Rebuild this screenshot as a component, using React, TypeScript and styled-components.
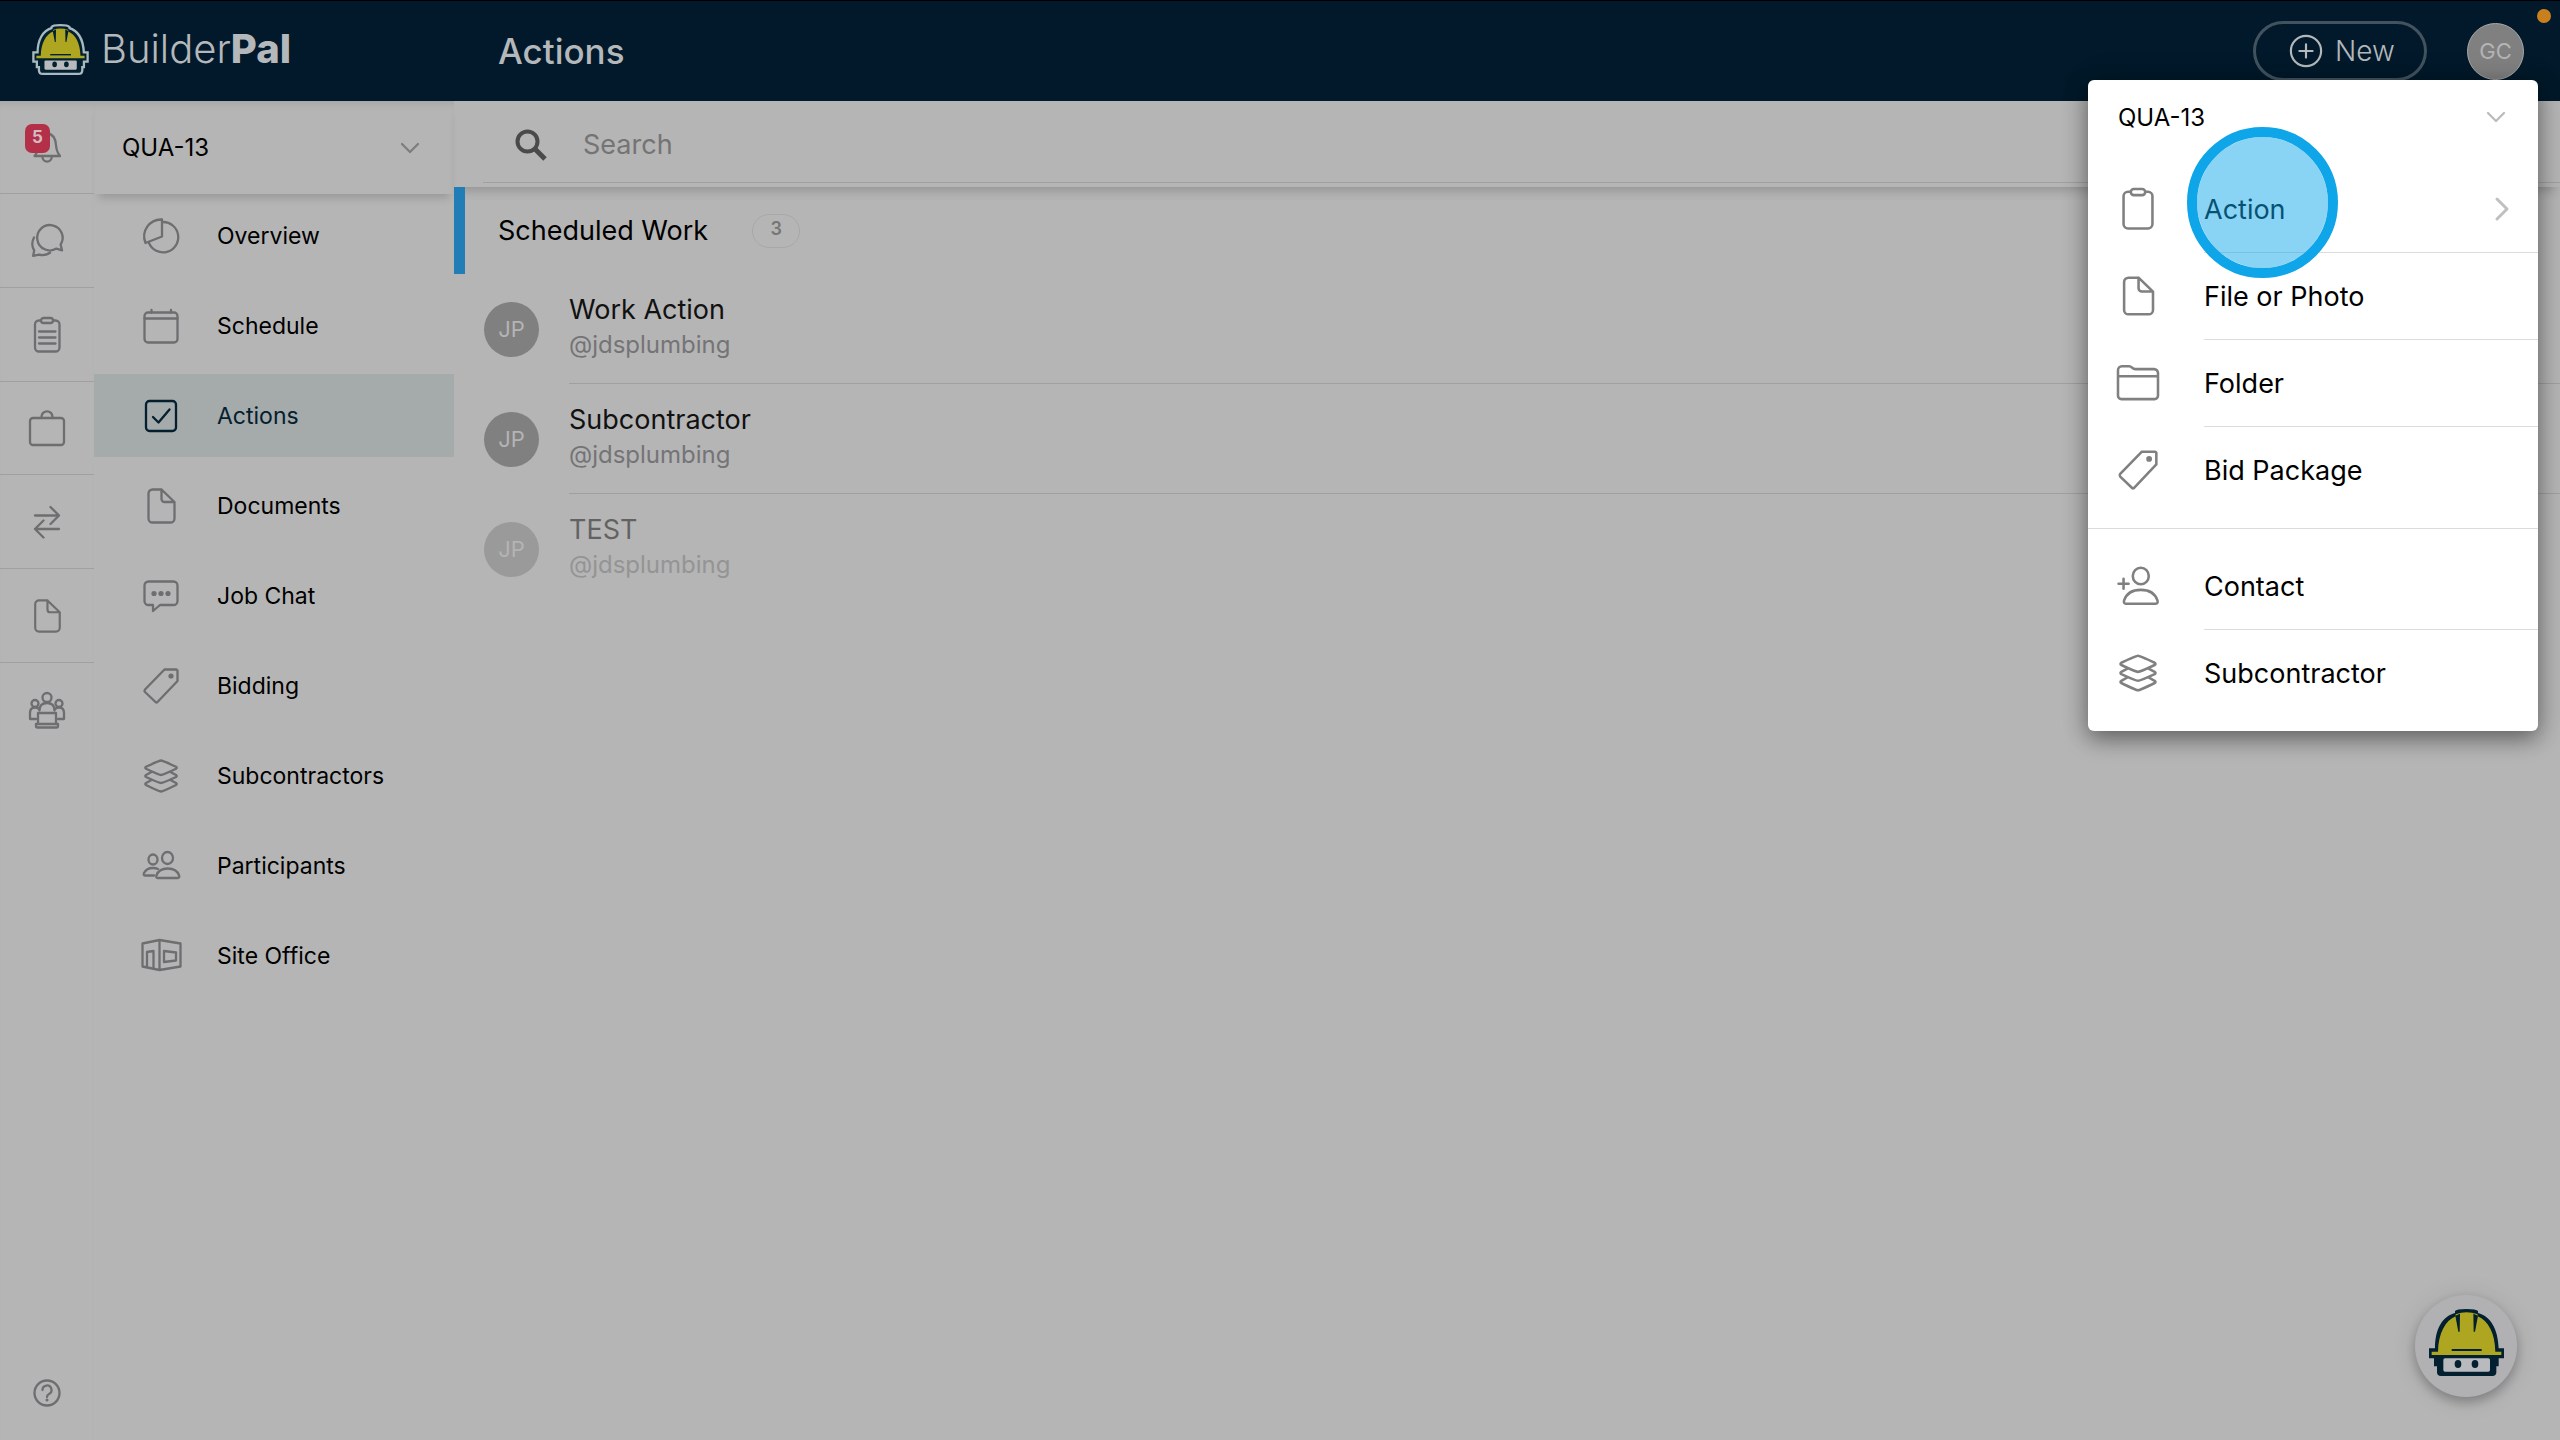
import React from "react";
import styled, { createGlobalStyle } from "styled-components";

const color = {
  navy: "#01192a",
  surface: "#b5b5b5",
  line: "#a0a0a0",
  icon: "#6e6e71",
  muted: "#747476",
  accent: "#217db5",
  selected: "#a5aaab",
};

const GlobalStyle = createGlobalStyle`
  *, *::before, *::after { box-sizing: border-box; }
  body {
    margin: 0;
    background: ${color.surface};
    color: #000;
    font-family: Inter, "Open Sans", sans-serif;
    font-size: 23px;
  }
  button, input, select { font: inherit; color: inherit; }
  h1, h2, p, ul { margin: 0; padding: 0; }
  ul { list-style: none; }
`;

/* ---------- icons ---------- */

const Svg = styled.svg`
  display: block;
  flex: none;
  overflow: visible;
  fill: none;
  stroke: currentColor;
  stroke-width: 2.3;
  stroke-linecap: round;
  stroke-linejoin: round;
`;

const Dot = styled.circle`
  fill: currentColor;
  stroke: none;
`;

type IconName =
  | "bell" | "chats" | "clipboard" | "briefcase" | "swap" | "file" | "team" | "help"
  | "pie" | "calendar" | "check" | "chat" | "tag" | "layers" | "people" | "office"
  | "clipboardPlain" | "folder" | "contact" | "plus";

const shapes: Record<IconName, React.ReactNode> = {
  bell: (
    <>
      <path d="M5.5 27C8.5 24 9 21 9 16C9 9 12 5 18 4C24 5 26.5 9 27 16C27.3 21 28.5 24 31 27Z" />
      <path d="M13.5 28a4.6 4.6 0 0 0 9.2 0" />
    </>
  ),
  chats: (
    <>
      <path d="M27.5 25.6L33 27.3L31.6 21.6A12.7 12.7 0 1 0 27.5 25.6Z" />
      <path d="M5 14.5C2.4 19 3 24.5 5.2 27.5L4.2 32.8L10 31.6C14 32.6 18 31.8 21 29.8" />
    </>
  ),
  clipboard: (
    <>
      <rect x="6" y="3.5" width="24.5" height="31" rx="4" />
      <rect x="12" y="1" width="12" height="5" rx="2.5" fill={color.surface} />
      <path d="M10 14.5H26.5M10 20.5H26.5M10 26.5H26.5" />
    </>
  ),
  clipboardPlain: (
    <>
      <rect x="5" y="2.5" width="26" height="33" rx="4" />
      <rect x="11.5" y="0" width="13" height="5.5" rx="2.7" fill="#fff" />
    </>
  ),
  briefcase: (
    <>
      <rect x="1" y="8" width="34" height="27" rx="3" />
      <path d="M12.5 8V6.8a5.5 5.5 0 0 1 11 0V8" />
    </>
  ),
  swap: <path d="M6 11.5H30M21.5 3L30 11.5L21.5 20M30 25H6M14.5 16.5L6 25L14.5 33.5" />,
  file: (
    <path d="M18.5 1.5H9.5a4 4 0 0 0-4 4v25a4 4 0 0 0 4 4h18a4 4 0 0 0 4-4V14L18.5 1.5V11a3 3 0 0 0 3 3h10" />
  ),
  team: (
    <>
      <circle cx="18" cy="5.5" r="4.5" />
      <circle cx="6" cy="11.5" r="3.5" />
      <circle cx="30" cy="11.5" r="3.5" />
      <path d="M10.5 18.5C10.5 13 13.5 11 18 11S25.5 13 25.5 18.5" />
      <path d="M7 27H1V21C1 17 3 15.5 6 15.5C7.5 15.5 9 16 10 17.2M29 27H35V21C35 17 33 15.5 30 15.5C28.5 15.5 27 16 26 17.2" />
      <path d="M9 21H27V32H9ZM7 32H29V34a1.5 1.5 0 0 1-1.5 1.5H8.5A1.5 1.5 0 0 1 7 34Z" />
    </>
  ),
  help: (
    <>
      <circle cx="18" cy="18" r="12.5" />
      <path d="M13.5 15a4.5 4.5 0 1 1 6.5 4c-1.5.8-2 1.5-2 3" />
      <Dot cx="18" cy="25" r="1.5" />
    </>
  ),
  pie: (
    <>
      <path d="M19 1.5A17 17 0 0 0 2.5 25L19 18.5Z" />
      <path d="M20 4A15.2 15.2 0 1 1 6 25" />
    </>
  ),
  calendar: (
    <>
      <rect x="1.5" y="4.5" width="33" height="30" rx="3.5" />
      <path d="M1.5 10.5H34.5M8.5 2V4.5M28 2V4.5" />
    </>
  ),
  check: (
    <>
      <rect x="3" y="3" width="30" height="30" rx="3.5" />
      <path d="M10 19L15.5 24.5L26.5 11.5" />
    </>
  ),
  chat: (
    <>
      <path d="M5.5 3.5H30.5a4 4 0 0 1 4 4V23a4 4 0 0 1-4 4H17L10 33V27H5.5a4 4 0 0 1-4-4V7.5a4 4 0 0 1 4-4Z" />
      <Dot cx="11" cy="15.5" r="2.6" />
      <Dot cx="18" cy="15.5" r="2.6" />
      <Dot cx="25" cy="15.5" r="2.6" />
    </>
  ),
  tag: (
    <>
      <path d="M21.5 1.5H33.5L34.5 2.5V13L14.5 34Q13.5 35 12.5 34L2 24Q1 22.8 2 21.5Z" />
      <Dot cx="28" cy="8" r="2.6" />
    </>
  ),
  layers: (
    <>
      <path d="M18 2.5Q19.5 2.5 33 8.8Q34.5 9.8 33 10.8Q20 17 18 17Q16 17 3 10.8Q1.5 9.8 3 8.8Q16.5 2.5 18 2.5Z" />
      <path d="M27.5 14L33 17Q34.5 18 33 19Q20 25 18 25Q16 25 3 19Q1.5 18 3 17L8.5 14" />
      <path d="M27.5 22L33 25Q34.5 26 33 27Q20 33.5 18 33.5Q16 33.5 3 27Q1.5 26 3 25L8.5 22" />
    </>
  ),
  people: (
    <>
      <ellipse cx="24.5" cy="10" rx="5.5" ry="6" />
      <ellipse cx="10" cy="11.5" rx="4.5" ry="5" />
      <path d="M14.5 30C13 30 13 28.5 13.5 27.3C15 23 19 20.5 24.8 20.5S34.5 23 36 27.3C36.5 28.5 36.5 30 35 30Z" />
      <path d="M11 27.5H2C.5 27.5.5 26 1 25C2.5 22 6 20 10 20C11.8 20 13.5 20.3 15 21" />
    </>
  ),
  office: (
    <>
      <path d="M-.5 5.5L16.5 2L37.5 5.5V28.5L16.5 32L-.5 28.5ZM16.5 2V32" />
      <path d="M4 29V14L10.5 13V30.5M21 13L33 14.5V22.5L21 24Z" />
    </>
  ),
  folder: (
    <path d="M0 12V6.5a3.5 3.5 0 0 1 3.5-3.5H10c2.5 0 3 2.5 5.5 2.5h17a3.5 3.5 0 0 1 3.5 3.5V29.5a3 3 0 0 1-3 3H3a3 3 0 0 1-3-3V12H36" />
  ),
  contact: (
    <>
      <ellipse cx="20.5" cy="9" rx="7.2" ry="7.5" />
      <path d="M7 34C5.500 34 5 32.5 5.500 31C7.5 25 13 21.500 20.500 21.500S33.500 25 35.500 31C36 32.500 35.500 34 34 34Z" />
      <path d="M.5 16H9.500M5 11.500V20.500" />
    </>
  ),
  plus: (
    <>
      <circle cx="18" cy="18" r="16" />
      <path d="M18 11V25M11 18H25" />
    </>
  ),
};

function Icon({ name, size = 36 }: { name: IconName; size?: number }) {
  return (
    <Svg width={size} height={size} viewBox="0 0 36 36" aria-hidden="true">
      {shapes[name]}
    </Svg>
  );
}

function Chevron({ turned = false }: { turned?: boolean }) {
  return turned ? (
    <Svg width={14} height={24} viewBox="0 0 14 24" aria-hidden="true">
      <path d="M2 2L12 12L2 22" strokeWidth={3} />
    </Svg>
  ) : (
    <Svg width={20} height={12} viewBox="0 0 20 12" aria-hidden="true">
      <path d="M2 2L10 10L18 2" />
    </Svg>
  );
}

const hatSilhouette =
  "M0 118H18C18 60 40 22 78 12V6Q82 0 112 0T147 6V12C185 22 207 60 209 118H225V148H209V172H202V190Q202 201 190 201H36Q24 201 24 190V172H15V148H0Z";

function Mascot({ width, outlined = false }: { width: number; outlined?: boolean }) {
  const pad = outlined ? 10 : 0;
  const w = 225 + pad * 2;
  const h = 201 + pad * 2;
  return (
    <svg width={width} height={Math.round((width * h) / w)} viewBox={`${-pad} ${-pad} ${w} ${h}`} aria-hidden="true">
      {outlined && <path d={hatSilhouette} fill="none" stroke="#a9b9c0" strokeWidth="20" />}
      <path d={hatSilhouette} fill="#02202f" />
      <path d="M8 128H27C28 72 50 34 80 22V16Q112 4 146 16V22C178 36 198 72 199 128H217V138H8Z" fill="#aea620" />
      <path d="M79 20L88 68H92L93 14ZM147 20L138 68H134L133 14Z" fill="#02202f" />
      <path d="M68 123H158" stroke="#02202f" strokeWidth="6" />
      <rect x="43" y="148" width="140" height="40" rx="5" fill="#b8babd" />
      <ellipse cx="87" cy="165" rx="10" ry="12" fill="#02202f" />
      <ellipse cx="138" cy="165" rx="10" ry="12" fill="#02202f" />
    </svg>
  );
}

/* ---------- shell ---------- */

const Page = styled.div`
  display: flex;
  flex-direction: column;
  min-height: 100vh;
`;

const TopBar = styled.header`
  display: flex;
  align-items: center;
  height: 101px;
  padding-right: 36px;
  border-top: 1px solid #000;
  background: ${color.navy};
  color: #b4b8bb;
`;

const Brand = styled.a`
  display: flex;
  align-items: center;
  gap: 12px;
  width: 498px;
  padding: 0 0 4px 32px;
  color: inherit;
  font-size: 40px;
  font-weight: 300;
  line-height: 48px;
  text-decoration: none;

  strong { font-weight: 800; }
`;

const PageTitle = styled.h1`
  flex: 1;
  font-size: 35px;
  font-weight: 500;
  line-height: 44px;
`;

const NewButton = styled.button`
  display: flex;
  align-items: center;
  justify-content: center;
  gap: 12px;
  width: 174px;
  height: 60px;
  margin-right: 40px;
  padding: 0 0 0 4px;
  border: 3px solid #42535f;
  border-radius: 30px;
  background: none;
  font-size: 28px;
  font-weight: 300;
`;

const Avatar = styled.span<{ $size: number; $ring?: boolean }>`
  display: flex;
  flex: none;
  align-items: center;
  justify-content: center;
  width: ${(p) => p.$size}px;
  height: ${(p) => p.$size}px;
  border: ${(p) => (p.$ring ? "1px solid #a8a8a8" : "none")};
  border-radius: 50%;
  background: #808080;
  color: #b4b4b4;
  font-size: 22px;
`;

const RecordingDot = styled.span`
  position: absolute;
  top: 9px;
  right: 9px;
  width: 14px;
  height: 14px;
  border-radius: 50%;
  background: #c8801f;
`;

const Body = styled.div`
  display: flex;
  flex: 1;
`;

const Rail = styled.nav`
  display: flex;
  flex-direction: column;
  width: 94px;
  box-shadow: inset 0 8px 8px -6px rgba(0, 0, 0, 0.1);
`;

const RailLink = styled.a<{ $plain?: boolean }>`
  position: relative;
  display: flex;
  align-items: center;
  justify-content: center;
  height: 94px;
  border-bottom: ${(p) => (p.$plain ? "none" : `1px solid ${color.line}`)};
  color: ${color.icon};

  &:nth-child(3n + 1) { height: 93px; }
  &:last-child { margin-top: auto; }
`;

const Badge = styled.span`
  position: absolute;
  top: 23px;
  left: 25px;
  width: 25px;
  height: 29px;
  border-radius: 7px;
  background: #b33048;
  color: #d3bcc1;
  font-size: 17px;
  font-weight: 700;
  line-height: 26px;
  text-align: center;
`;

const Sidebar = styled.nav`
  width: 360px;
`;

const Picker = styled.label<{ $inMenu?: boolean }>`
  display: flex;
  align-items: center;
  height: ${(p) => (p.$inMenu ? 74 : 93)}px;
  margin-bottom: ${(p) => (p.$inMenu ? 12 : 0)}px;
  padding: 0 ${(p) => (p.$inMenu ? 32 : 34)}px 0 ${(p) => (p.$inMenu ? 30 : 28)}px;
  color: ${(p) => (p.$inMenu ? "#bcbcbc" : "#7e7e7e")};
  box-shadow: ${(p) =>
    p.$inMenu ? "none" : "0 9px 8px -5px rgba(0, 0, 0, 0.16), inset 0 8px 8px -6px rgba(0, 0, 0, 0.1)"};

  select {
    flex: 1;
    appearance: none;
    padding: 0;
    border: 0;
    outline: 0;
    background: none;
    color: #000;
    font-size: 24px;
  }
`;

const NavItem = styled.a<{ $current?: boolean }>`
  display: flex;
  align-items: center;
  gap: 38px;
  height: 83px;
  margin-bottom: 7px;
  padding-left: 49px;
  background: ${(p) => (p.$current ? color.selected : "none")};
  color: ${(p) => (p.$current ? "#04202f" : "#000")};
  text-decoration: none;

  svg { color: ${(p) => (p.$current ? "#04202f" : color.icon)}; }
`;

/* ---------- main column ---------- */

const Main = styled.main`
  flex: 1;
  min-width: 0;
`;

const SearchBar = styled.div`
  height: 86px;
  padding-left: 29px;
  box-shadow: 0 9px 10px -5px rgba(0, 0, 0, 0.18);
`;

const SearchField = styled.label`
  display: flex;
  align-items: center;
  gap: 36px;
  height: 82px;
  padding: 6px 0 0 32px;
  border-bottom: 1px solid ${color.line};
  color: #4a4a4a;

  input {
    flex: 1;
    padding: 0;
    border: 0;
    outline: 0;
    background: none;
    font-size: 27px;
  }
  input::placeholder { color: #747474; opacity: 1; }
`;

const SectionHead = styled.div`
  position: relative;
  display: flex;
  align-items: center;
  gap: 44px;
  height: 87px;
  padding-left: 33px;
  border-left: 11px solid ${color.accent};

  h2 {
    font-size: 27px;
    font-weight: 400;
    line-height: 36px;
  }
`;

const Count = styled.span`
  width: 48px;
  height: 34px;
  border: 1px solid #a8a8a8;
  border-radius: 17px;
  color: #757577;
  font-size: 18px;
  font-weight: 600;
  line-height: 28px;
  text-align: center;
`;

const WorkRow = styled.li<{ $faded?: boolean }>`
  display: flex;
  align-items: center;
  gap: 30px;
  padding-left: 30px;

  > * { opacity: ${(p) => (p.$faded ? 0.5 : 1)}; }
`;

const WorkText = styled.div<{ $last?: boolean }>`
  flex: 1;
  height: 110px;
  padding-top: 18px;
  border-bottom: ${(p) => (p.$last ? "none" : `1px solid ${color.line}`)};

  p {
    font-size: 27px;
    line-height: 36px;
    color: #111;
  }
  p + p {
    font-size: 24px;
    line-height: 34px;
    color: ${color.muted};
  }
`;

/* ---------- floating layers ---------- */

const Menu = styled.div`
  position: absolute;
  top: 80px;
  right: 22px;
  width: 450px;
  padding-bottom: 15px;
  border-radius: 6px;
  background: #fff;
  box-shadow: 0 8px 22px rgba(0, 0, 0, 0.4), 0 0 30px rgba(0, 0, 0, 0.14);
`;

const MenuGroup = styled.ul`
  & + & {
    margin-top: 15px;
    padding-top: 14px;
    border-top: 1px solid #dcdcdc;
  }
`;

const MenuItem = styled.li`
  & + & > button > span { border-top: 1px solid #dcdcdc; }
  & + & > button { height: 87px; }
`;

const MenuButton = styled.button`
  display: flex;
  align-items: center;
  gap: 46px;
  width: 100%;
  height: 86px;
  padding: 0 0 0 30px;
  border: 0;
  background: none;
  color: #808080;
  text-align: left;
`;

const MenuLabel = styled.span`
  display: flex;
  flex: 1;
  align-items: center;
  justify-content: space-between;
  height: 100%;
  padding-right: 29px;
  color: #000;
  font-size: 27px;

  svg { color: #c0c0c0; }
`;

const ClickMarker = styled.span`
  position: absolute;
  top: 47px;
  left: 99px;
  width: 151px;
  height: 151px;
  border: 10px solid #0fa5e9;
  border-radius: 50%;
  background: rgba(14, 165, 233, 0.49);
  background-clip: padding-box;
  pointer-events: none;
`;

const HelperButton = styled.button`
  position: fixed;
  right: 43px;
  bottom: 43px;
  display: flex;
  align-items: center;
  justify-content: center;
  width: 102px;
  height: 102px;
  padding: 0 0 8px;
  border: 0;
  border-radius: 50%;
  background: #b1b1b4;
  box-shadow: 0 5px 12px rgba(0, 0, 0, 0.26), 0 2px 26px rgba(0, 0, 0, 0.1);
`;

/* ---------- data ---------- */

const railLinks: { icon: IconName; label: string }[] = [
  { icon: "bell", label: "Notifications" },
  { icon: "chats", label: "Messages" },
  { icon: "clipboard", label: "Tasks" },
  { icon: "briefcase", label: "Jobs" },
  { icon: "swap", label: "Transfers" },
  { icon: "file", label: "Files" },
  { icon: "team", label: "Team" },
];

const navItems: { icon: IconName; label: string }[] = [
  { icon: "pie", label: "Overview" },
  { icon: "calendar", label: "Schedule" },
  { icon: "check", label: "Actions" },
  { icon: "file", label: "Documents" },
  { icon: "chat", label: "Job Chat" },
  { icon: "tag", label: "Bidding" },
  { icon: "layers", label: "Subcontractors" },
  { icon: "people", label: "Participants" },
  { icon: "office", label: "Site Office" },
];

const work = [
  { title: "Work Action", faded: false },
  { title: "Subcontractor", faded: false },
  { title: "TEST", faded: true },
];

const menuGroups: { icon: IconName; label: string; nested?: boolean }[][] = [
  [
    { icon: "clipboardPlain", label: "Action", nested: true },
    { icon: "file", label: "File or Photo" },
    { icon: "folder", label: "Folder" },
    { icon: "tag", label: "Bid Package" },
  ],
  [
    { icon: "contact", label: "Contact" },
    { icon: "layers", label: "Subcontractor" },
  ],
];

function JobPicker({ inMenu = false }: { inMenu?: boolean }) {
  return (
    <Picker $inMenu={inMenu}>
      <select aria-label="Job" defaultValue="QUA-13">
        <option>QUA-13</option>
      </select>
      <Chevron />
    </Picker>
  );
}

export default function App() {
  return (
    <Page>
      <GlobalStyle />
      <TopBar>
        <Brand href="#">
          <Mascot width={57} outlined />
          <span>
            Builder<strong>Pal</strong>
          </span>
        </Brand>
        <PageTitle>Actions</PageTitle>
        <NewButton type="button">
          <Icon name="plus" size={34} />
          New
        </NewButton>
        <Avatar $size={57} $ring>GC</Avatar>
        <RecordingDot />
      </TopBar>

      <Body>
        <Rail aria-label="Workspace">
          {railLinks.map((link, i) => (
            <RailLink key={link.icon} href="#" aria-label={link.label} $plain={i === railLinks.length - 1}>
              <Icon name={link.icon} size={link.icon === "file" ? 34 : 36} />
              {link.icon === "bell" && <Badge>5</Badge>}
            </RailLink>
          ))}
          <RailLink href="#" aria-label="Help" $plain>
            <Icon name="help" />
          </RailLink>
        </Rail>

        <Sidebar aria-label="Job">
          <JobPicker />
          {navItems.map((item) => (
            <NavItem key={item.label} href="#" $current={item.label === "Actions"}>
              <Icon name={item.icon} />
              {item.label}
            </NavItem>
          ))}
        </Sidebar>

        <Main>
          <SearchBar>
            <SearchField>
              <Svg width={32} height={32} viewBox="0 0 32 32" aria-hidden="true">
                <circle cx="12.5" cy="12.5" r="10" strokeWidth={4} />
                <path d="M20 20L30 30" strokeWidth={5} strokeLinecap="butt" />
              </Svg>
              <input type="search" placeholder="Search" aria-label="Search" />
            </SearchField>
          </SearchBar>
          <SectionHead>
            <h2>Scheduled Work</h2>
            <Count>3</Count>
          </SectionHead>
          <ul>
            {work.map((row, i) => (
              <WorkRow key={row.title} $faded={row.faded}>
                <Avatar $size={55}>JP</Avatar>
                <WorkText $last={i === work.length - 1}>
                  <p>{row.title}</p>
                  <p>@jdsplumbing</p>
                </WorkText>
              </WorkRow>
            ))}
          </ul>
        </Main>
      </Body>

      <Menu>
        <JobPicker inMenu />
        {menuGroups.map((group) => (
          <MenuGroup key={group[0].label}>
            {group.map((item) => (
              <MenuItem key={item.label}>
                <MenuButton type="button">
                  <Icon name={item.icon} size={40} />
                  <MenuLabel>
                    {item.label}
                    {item.nested && <Chevron turned />}
                  </MenuLabel>
                </MenuButton>
              </MenuItem>
            ))}
          </MenuGroup>
        ))}
        <ClickMarker />
      </Menu>

      <HelperButton type="button" aria-label="Open assistant">
        <Mascot width={75} />
      </HelperButton>
    </Page>
  );
}
